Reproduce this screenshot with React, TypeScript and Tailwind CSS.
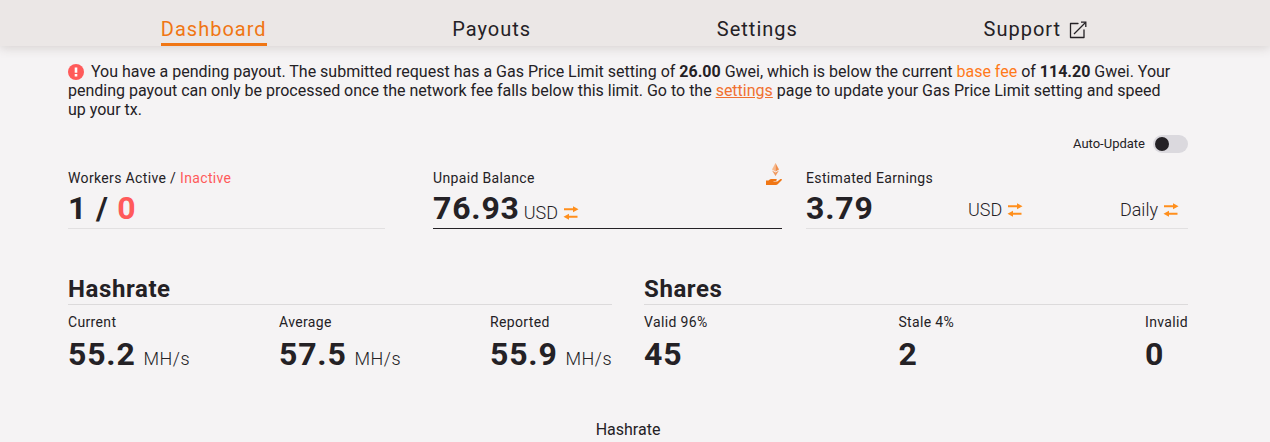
import type { ReactNode } from "react";

interface Stat {
  label: string;
  value: string;
  unit?: string;
}

const hashrateStats: Stat[] = [
  { label: "Current", value: "55.2", unit: "MH/s" },
  { label: "Average", value: "57.5", unit: "MH/s" },
  { label: "Reported", value: "55.9", unit: "MH/s" },
];

const shareStats: Stat[] = [
  { label: "Valid 96%", value: "45" },
  { label: "Stale 4%", value: "2" },
  { label: "Invalid", value: "0" },
];

const navItems = ["Dashboard", "Payouts", "Settings", "Support"];

function ExternalIcon() {
  return (
    <svg width="18" height="18" viewBox="0 0 18 18" fill="none" stroke="currentColor" strokeWidth="1.3" aria-hidden="true">
      <path d="M9 2.5H1.5v14H15V9" strokeLinejoin="round" strokeLinecap="round" />
      <path d="M5 13 16.5 1.5" />
      <path d="M12 1.2h4.8V6" />
    </svg>
  );
}

function AlertIcon() {
  return (
    <svg className="mr-[7px] inline-block align-[-3px]" width="16" height="16" viewBox="0 0 16 16" aria-hidden="true">
      <circle cx="8" cy="8" r="8" fill="#ff5a5a" />
      <path d="M6.7 3.6h2.6v5.2H6.7zM6.7 10h2.6v2.4H6.7z" fill="#fff" />
    </svg>
  );
}

function SwapIcon() {
  return (
    <svg width="16" height="14" viewBox="0 0 16 14" fill="#ff8f1c" aria-hidden="true">
      <path d="M1 2.2h9V.3l5.500 3L10 6.200V4.300H1z" />
      <path d="M14.500 9.700H6V7.800L.5 10.700 6 13.700V11.800h8.500z" />
    </svg>
  );
}

function PayoutIcon() {
  return (
    <svg width="16" height="23" viewBox="0 0 16 23" aria-hidden="true">
      <path d="M9.500 0 6 6.500l3.500 2z" fill="#f8b98c" />
      <path d="M9.500 0 13 6.500l-3.500 2z" fill="#ef8e4c" />
      <path d="M6 7.500 9.500 9.600V13zM13 7.500 9.500 9.600V13z" fill="#f09a60" />
      <path d="M0 17.500h2.500C4 16 5.500 15.700 7 16h3c1.300.2 1 1.700-.3 1.900H7.500v.6h3.800l3.200-2.400c1-.6 2 .2 1.200 1.200l-4 4c-.5.5-1 .7-1.700.7H0z" fill="#f07614" />
    </svg>
  );
}

function SwapButton({ children }: { children: ReactNode }) {
  return (
    <button type="button" className="flex items-center gap-[5px] text-lg leading-6 font-light">
      {children}
      <SwapIcon />
    </button>
  );
}

function StatList({ title, stats }: { title: string; stats: Stat[] }) {
  return (
    <section className="min-w-0 flex-1">
      <h2 className="border-b border-[#dcdadb] text-2xl leading-[30px] font-bold tracking-wide">{title}</h2>
      <dl className="flex justify-between pt-[7px]">
        {stats.map((stat) => (
          <div key={stat.label}>
            <dt className="text-sm leading-5 tracking-wide">{stat.label}</dt>
            <dd className="flex items-baseline gap-2 pt-1">
              <span className="text-[32px] leading-9 font-bold tracking-wide">{stat.value}</span>
              {stat.unit && <span className="text-lg leading-6 font-light tracking-wide">{stat.unit}</span>}
            </dd>
          </div>
        ))}
      </dl>
    </section>
  );
}

export default function App() {
  return (
    <div className="min-h-screen bg-[#f5f3f4] font-[Roboto,sans-serif] text-[#242125]">
      <header className="bg-[#ebe7e6] pr-[14px] shadow-[0_2px_10px_rgba(80,60,50,0.18)]">
        <nav className="mx-auto flex max-w-[1120px] justify-around pt-4 pr-2">
          {navItems.map((item) => (
            <a
              key={item}
              href="#"
              className={
                item === "Dashboard"
                  ? "flex items-center border-b-3 border-[#f07614] text-xl leading-[27px] tracking-wider text-[#f07614]"
                  : "flex items-center gap-2 border-b-3 border-transparent text-xl leading-[27px] tracking-wider"
              }
            >
              {item}
              {item === "Support" && <ExternalIcon />}
            </a>
          ))}
        </nav>
      </header>

      <main className="pr-[14px]">
        <div className="mx-auto max-w-[1120px] pt-4">
          <p className="pr-2 text-base leading-[19px]">
            <AlertIcon />
            You have a pending payout. The submitted request has a Gas Price Limit setting of <b>26.00</b> Gwei, which is
            below the current <a href="#" className="text-[#ff7a1a]">base fee</a> of <b>114.20</b> Gwei. Your pending payout
            can only be processed once the network fee falls below this limit. Go to the{" "}
            <a href="#" className="text-[#f07030] underline">settings</a> page to update your Gas Price Limit setting and
            speed up your tx.
          </p>

          <label className="mt-4 flex items-center justify-end gap-2 text-[13px] leading-[18px]">
            Auto-Update
            <input
              type="checkbox"
              role="switch"
              className="h-[18px] w-[35px] appearance-none rounded-full bg-[#dbd9de] p-0.5 before:block before:size-[14px] before:rounded-full before:bg-[#242125] checked:before:ml-auto"
            />
          </label>

          <div className="mt-[15px] flex">
            <section className="mr-12 w-[317px] border-b border-[#e2e0e1]">
              <h3 className="text-sm leading-5 tracking-wide">
                Workers Active / <span className="text-[#ff5a5a]">Inactive</span>
              </h3>
              <p className="text-[32px] leading-10 font-bold tracking-wide">
                1 / <span className="text-[#ff5a5a]">0</span>
              </p>
            </section>

            <section className="mr-6 w-[349px] border-b border-[#242125]">
              <div className="flex h-5 items-end justify-between">
                <h3 className="text-sm leading-5 tracking-wide">Unpaid Balance</h3>
                <button type="button" aria-label="Request payout" className="pb-0.5">
                  <PayoutIcon />
                </button>
              </div>
              <div className="flex items-baseline gap-1">
                <span className="text-[32px] leading-10 font-bold tracking-wide">76.93</span>
                <SwapButton>USD</SwapButton>
              </div>
            </section>

            <section className="flex-1 border-b border-[#e2e0e1]">
              <h3 className="text-sm leading-5 tracking-wide">Estimated Earnings</h3>
              <div className="flex h-10 items-end justify-between pr-[9px]">
                <span className="text-[32px] leading-10 font-bold tracking-wide">3.79</span>
                <div className="flex w-[211px] justify-between pb-[6px]">
                  <SwapButton>USD</SwapButton>
                  <SwapButton>Daily</SwapButton>
                </div>
              </div>
            </section>
          </div>

          <div className="mt-[45px] flex gap-8">
            <StatList title="Hashrate" stats={hashrateStats} />
            <StatList title="Shares" stats={shareStats} />
          </div>

          <h3 className="pt-12 text-center text-base leading-5">Hashrate</h3>
        </div>
      </main>
    </div>
  );
}
